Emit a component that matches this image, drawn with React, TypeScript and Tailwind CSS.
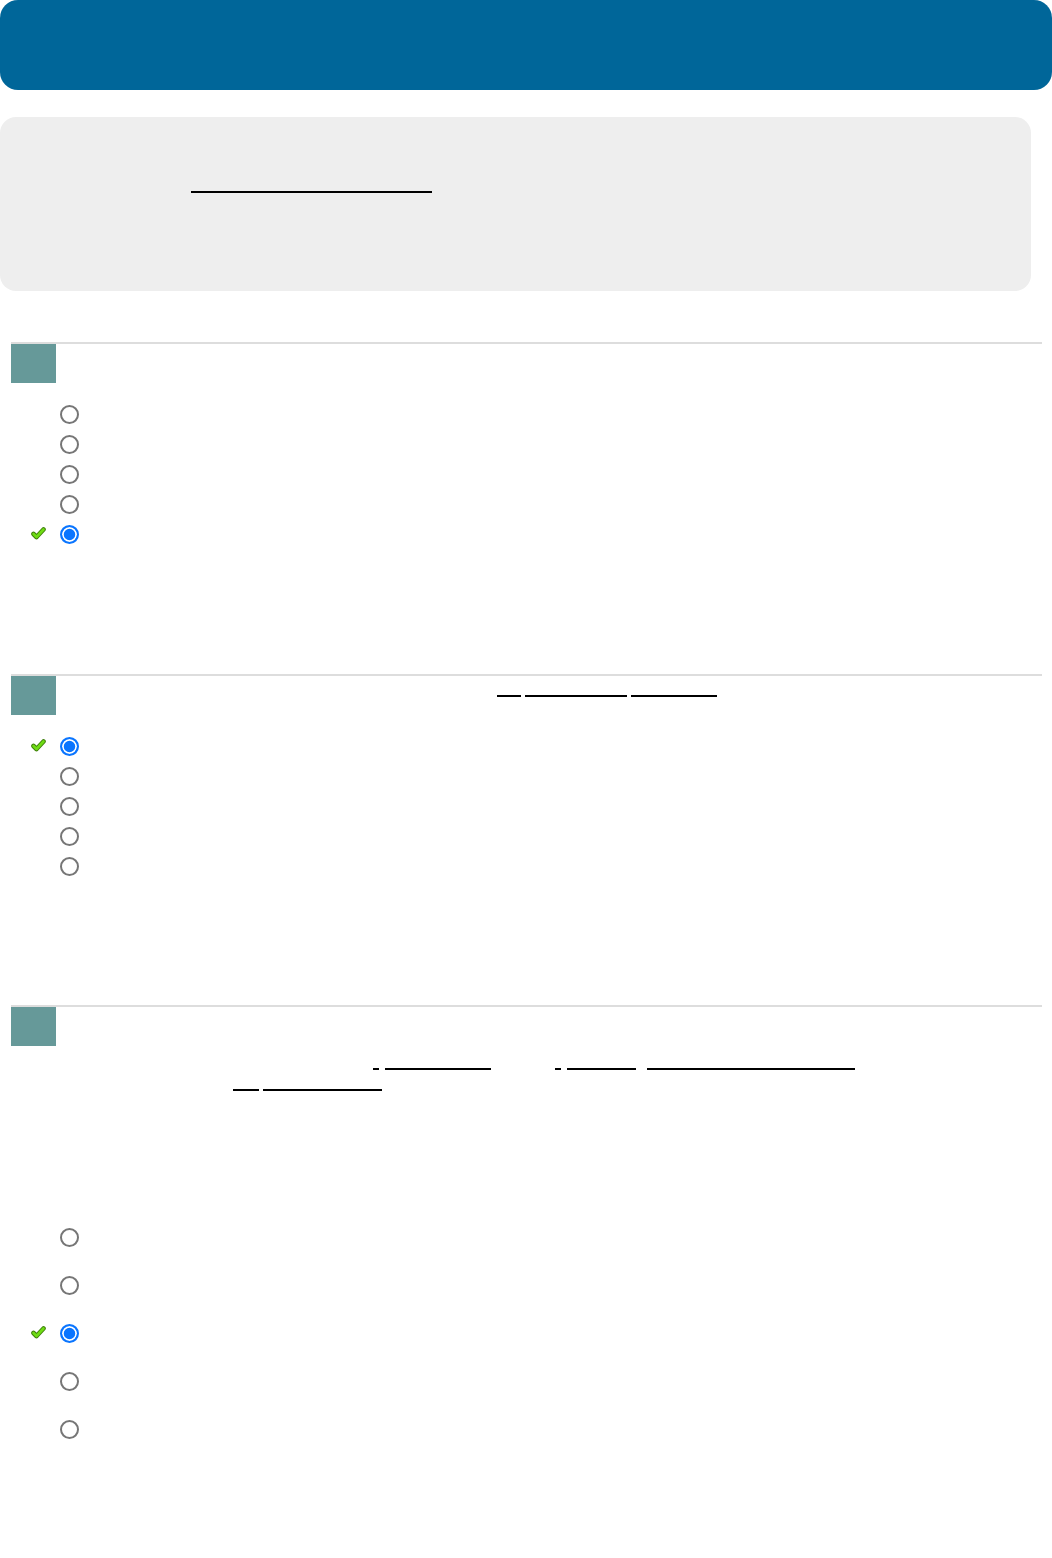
import React from 'react';

// Small green tick shown next to the right answer
const Tick = () => (
    <svg width="15" height="13" viewBox="0 0 15 13">
        <polyline
            points="2.5,7 5.5,10 12.5,2.5"
            fill="none"
            stroke="#3f7f0c"
            strokeWidth="4.6"
            strokeLinecap="round"
            strokeLinejoin="round"
        />
        <polyline
            points="2.5,7 5.5,10 12.5,2.5"
            fill="none"
            stroke="#6fdc14"
            strokeWidth="2.6"
            strokeLinecap="round"
            strokeLinejoin="round"
        />
    </svg>
);

const Radio = ({ checked }: { checked?: boolean }) => (
    <input
        type="radio"
        checked={!!checked}
        readOnly
        className="appearance-none m-0 w-[19px] h-[19px] shrink-0 rounded-full border-2 border-[#767676] bg-white checked:border-[#0a75ff] checked:bg-[#0a75ff] checked:shadow-[inset_0_0_0_1.75px_white]"
    />
);

const Option = ({ correct, tall }: { correct?: boolean; tall?: boolean }) => (
    <div className={tall ? 'flex items-center h-[48px] pl-[20px]' : 'flex items-center h-[30px] pl-[20px]'}>
        <div className="w-[15px] flex items-center -mt-[2px]">{correct && <Tick />}</div>
        <div className="ml-[14px] flex items-center">
            <Radio checked={correct} />
        </div>
    </div>
);

const Line = ({ className }: { className: string }) => (
    <span className={`block h-[2px] bg-black shrink-0 ${className}`} />
);

const NumberBox = () => <div className="w-[45px] h-[39px] bg-[#669999] shrink-0" />;

export default function App() {
    return (
        <div className="w-[1052px] min-h-[1558px] bg-white font-['Liberation_Sans',sans-serif]">
            {/* banner */}
            <div className="h-[90px] bg-[#006699] rounded-[18px]" />

            {/* intro panel */}
            <div className="mt-[27px] w-[1031px] h-[174px] bg-[#eeeeee] rounded-[16px] pt-[74px] pl-[191px]">
                <Line className="w-[241px]" />
            </div>

            {/* question 1 */}
            <section className="mt-[51px] ml-[11px] w-[1031px] border-t-2 border-[#dddddd]">
                <NumberBox />
                <div className="pt-[16px]">
                    <Option />
                    <Option />
                    <Option />
                    <Option />
                    <Option correct />
                </div>
            </section>

            {/* question 2 */}
            <section className="mt-[125px] ml-[11px] w-[1031px] border-t-2 border-[#dddddd]">
                <div className="flex">
                    <NumberBox />
                    <div className="flex pt-[19px]">
                        <Line className="ml-[441px] w-[24px]" />
                        <Line className="ml-[4px] w-[102px]" />
                        <Line className="ml-[4px] w-[86px]" />
                    </div>
                </div>
                <div className="pt-[16px]">
                    <Option correct />
                    <Option />
                    <Option />
                    <Option />
                    <Option />
                </div>
            </section>

            {/* question 3 */}
            <section className="mt-[124px] ml-[11px] w-[1031px] border-t-2 border-[#dddddd]">
                <NumberBox />
                <div className="pt-[4px]">
                    <div className="flex items-end h-[21px] pb-[1px]">
                        <Line className="ml-[362px] w-[6px]" />
                        <Line className="ml-[6px] w-[106px]" />
                        <Line className="ml-[64px] w-[6px]" />
                        <Line className="ml-[6px] w-[69px]" />
                        <Line className="ml-[11px] w-[208px]" />
                    </div>
                    <div className="flex items-end h-[21px] pb-[1px]">
                        <Line className="ml-[222px] w-[26px]" />
                        <Line className="ml-[4px] w-[119px]" />
                    </div>
                </div>
                <div className="pt-[121px]">
                    <Option tall />
                    <Option tall />
                    <Option tall correct />
                    <Option tall />
                    <Option tall />
                </div>
            </section>
        </div>
    );
}
